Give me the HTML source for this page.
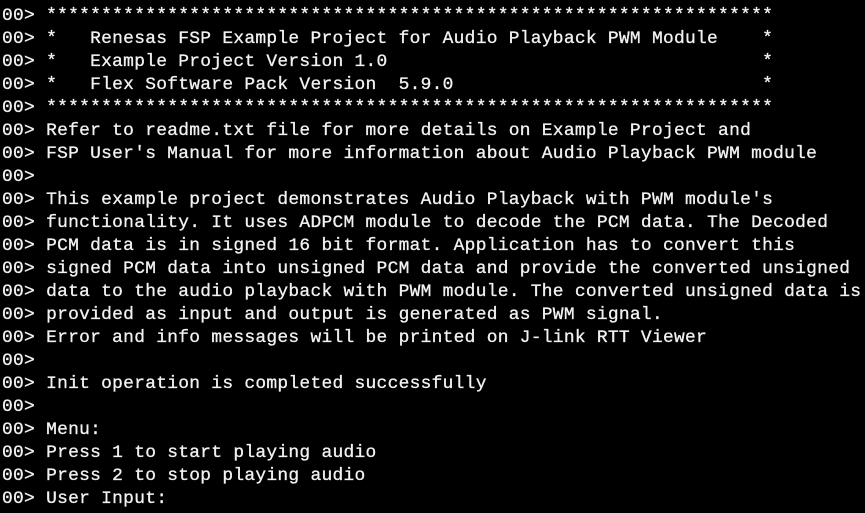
<!DOCTYPE html>
<html><head><meta charset="utf-8"><style>
html,body{margin:0;padding:0;background:#000;width:865px;height:513px;overflow:hidden}
pre{margin:0;position:absolute;left:2px;top:5px;color:#f2f2f2;font-family:"Liberation Mono",monospace;font-size:17.9px;letter-spacing:0.28px;line-height:23px;white-space:pre;-webkit-text-stroke:0.3px #f2f2f2}
</style></head><body><pre>00> ******************************************************************
00> *   Renesas FSP Example Project for Audio Playback PWM Module    *
00> *   Example Project Version 1.0                                  *
00> *   Flex Software Pack Version  5.9.0                            *
00> ******************************************************************
00> Refer to readme.txt file for more details on Example Project and
00> FSP User's Manual for more information about Audio Playback PWM module
00>
00> This example project demonstrates Audio Playback with PWM module's
00> functionality. It uses ADPCM module to decode the PCM data. The Decoded
00> PCM data is in signed 16 bit format. Application has to convert this
00> signed PCM data into unsigned PCM data and provide the converted unsigned
00> data to the audio playback with PWM module. The converted unsigned data is
00> provided as input and output is generated as PWM signal.
00> Error and info messages will be printed on J-link RTT Viewer
00>
00> Init operation is completed successfully
00>
00> Menu:
00> Press 1 to start playing audio
00> Press 2 to stop playing audio
00> User Input:</pre></body></html>
